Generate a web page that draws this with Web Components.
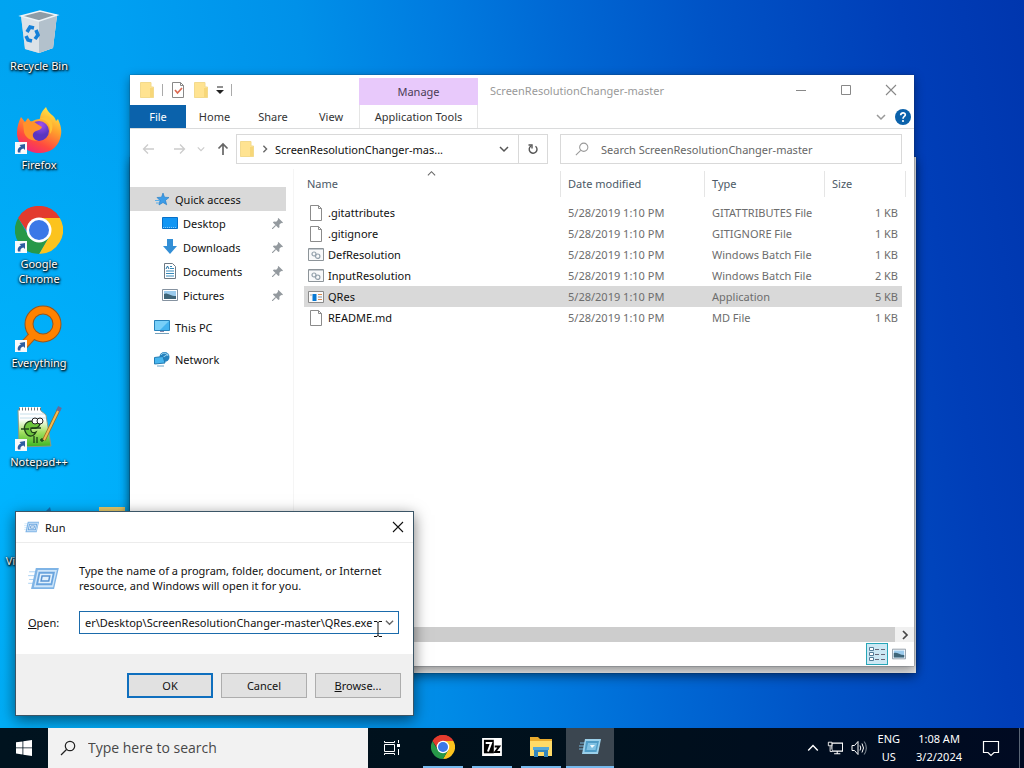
<!DOCTYPE html>
<html lang="en">
<head>
<meta charset="utf-8">
<title>Desktop</title>
<style>
  html, body { margin: 0; height: 100%; }
  body { font: 11px/15px "Noto Sans", "Open Sans", sans-serif; color: #111; overflow: hidden; }
</style>
</head>
<body>
<desk-top></desk-top>
<script>
const ICONS = {
  bin: ['0 0 48 48', `<path d="M6 8 25 3l17 4-4 33-14 5-14-4z" fill="#b9c7d2"/><path d="M6 8l18 5 18-6-4 33-14 5-14-4z" fill="#dbe2e8"/><path d="M24 13 42 7l-4 33-14 5z" fill="#b3c1cc"/><path d="M6 8 25 3l17 4-18 6z" fill="#8e9ca6" stroke="#edf4f8" stroke-width="1.4"/><g fill="none" stroke="#1480d8" stroke-width="3.600"><path d="M12 24l3-5 4 1"/><path d="M21 22l2 5-3 4"/><path d="M17 33l-4-1-2-4"/></g>`],
  firefox: ['0 0 48 48', `<defs><linearGradient id="a" x1=".8" y1="0" x2=".3" y2="1"><stop offset="0" stop-color="#fff04a"/><stop offset=".4" stop-color="#ffa02c"/><stop offset=".75" stop-color="#ff4a3f"/><stop offset="1" stop-color="#f0257a"/></linearGradient><radialGradient id="b" cx=".6" cy=".2"><stop offset="0" stop-color="#a050f0"/><stop offset="1" stop-color="#5a35c0"/></radialGradient></defs><path d="M6 10l4 5 3-4 3 4c3-2 6-3 9-3 0-5 3-9 6-12 2 7 9 8 10 14l2-2c4 9 4 14 2 20-3 9-11 14-20 14C12 46 2 38 2 26c0-7 2-12 4-16z" fill="url(#a)"/><circle cx="24" cy="24" r="10" fill="url(#b)"/><path d="M8 16c5-3 12-2 14 1l5 3c-1 4-8 3-9 7-1 3 2 6 5 7-8 0-13-4-14-9z" fill="#ff922b"/><path d="M24 12c9 0 12 7 11 15 4-5 3-14-2-18z" fill="#ffc336"/>`],
  chrome: ['0 0 48 48', `<path d="M24 24 3.200 12A24 24 0 0 1 44.800 12z" fill="#e33b2e"/><path d="M24 12h20.800A24 24 0 0 1 24 48l10.500-18z" fill="#fcc31e"/><path d="M3.200 12l10.500 18L34.500 30 24 48A24 24 0 0 1 3.200 12z" fill="#279848"/><path d="M3.200 12A24 24 0 0 1 44.800 12H24L13 27z" fill="#e33b2e"/><circle cx="24" cy="24" r="12.500" fill="#fff"/><circle cx="24" cy="24" r="10" fill="#3b78e7"/>`],
  everything: ['0 0 48 48', `<path d="M20 28 8 41" stroke="#a75a1c" stroke-width="9"/><circle cx="28" cy="19" r="14" fill="none" stroke="#94561f" stroke-width="9"/><path d="M20 28 8 41" stroke="#ff8200" stroke-width="7"/><circle cx="28" cy="19" r="14" fill="none" stroke="#ff8200" stroke-width="7"/>`],
  notepad: ['0 0 48 48', `<defs><linearGradient id="n" x2="0" y2="1"><stop offset=".25" stop-color="#fff"/><stop offset=".6" stop-color="#a4e062"/><stop offset="1" stop-color="#39b420"/></linearGradient></defs><path d="M3 6h22l6 5 5 31-32 1z" fill="url(#n)" stroke="#8a9a88"/><path d="M4 5h22" stroke="#fff" stroke-width="4"/><path d="M4 5h22" stroke="#777" stroke-width="3" stroke-dasharray="1 2"/><path d="M5 10h24M5 14h26" stroke="#c6dfea"/><g fill="#6cc43c" stroke="#1d3d18" stroke-width="1.300"><path d="M20 18c-8-3-12 3-10 9s8 7 11 1c-4 2-6-1-5-4 4 1 8 0 9-4z"/></g><circle cx="20" cy="17" r="3" fill="#fff" stroke="#222"/><circle cx="25" cy="17" r="3" fill="#fff" stroke="#222"/><path d="M6 25h8M17 24h9M19 32v7M22 33v6M25 36h4M27 34v4" fill="none" stroke="#1d4418" stroke-width="1.300"/><path d="M29 36 44 5" stroke="#9a671b" stroke-width="3.500"/><path d="M29 36 44 5" stroke="#f2bc54" stroke-width="2"/><path d="M43 7l2-4" stroke="#6a6b96" stroke-width="4"/>`],
  vscode: ['0 0 48 48', `<path d="M24 15 35 4l1 4v28l-8 4L16 30z" fill="#1471b4"/>`],
  yellow: ['0 0 48 48', `<path d="M9 4h26v40H9z" fill="#e9cb6a"/>`],
  shortcut: ['0 0 12 12', `<path d="M0 0h12v12H0z" fill="#f8f9fb"/><path d="M3 10.500C2 7 4 5 6 4.500L4.500 3 10 2v6L8.500 6.500C6 7 5 8.500 5.500 10.500z" fill="#2d5ca0"/>`],
  folder: ['0 0 16 16', `<path d="M1.500.5H12V5h2.500v11h-13z" fill="#ffe391"/><path d="M11 6h3v9h-3z" fill="#f7d779"/><path d="M1.500.5H12V5h2.500v10.500h-13z" fill="none" stroke="#f3da8d"/>`],
  check: ['0 0 16 16', `<path d="M2.500.5h8l3 3v12h-11z" fill="#fff" stroke="#888"/><path d="M10.500.5v3h3" fill="none" stroke="#888"/><path d="M5 8l2.500 3L12 6" fill="none" stroke="#dc6a52" stroke-width="1.700"/>`],
  qat: ['0 0 8 8', `<path d="M1 1h6" stroke="#222"/><path d="M0 4h8L4 8z" fill="#222"/>`],
  min: ['0 0 12 12', `<path d="M1 6.500h10" stroke="currentColor"/>`],
  max: ['0 0 12 12', `<path d="M1.500 1.500h9v9h-9z" fill="none" stroke="currentColor"/>`],
  close: ['0 0 12 12', `<path d="M1 1l10 10M11 1 1 11" stroke="currentColor" stroke-width="1.100"/>`],
  down: ['0 0 10 10', `<path d="M1 3l4 4 4-4" fill="none" stroke="currentColor" stroke-width="1.500"/>`],
  up: ['0 0 10 10', `<path d="M1 7l4-4 4 4" fill="none" stroke="currentColor" stroke-width="1.200"/>`],
  right: ['0 0 10 10', `<path d="M3 1l4 4-4 4" fill="none" stroke="currentColor" stroke-width="1.700"/>`],
  back: ['0 0 14 14', `<path d="M2 7h10M6 2.500 1.500 7 6 11.500" fill="none" stroke="currentColor" stroke-width="1.300"/>`],
  fwd: ['0 0 14 14', `<path d="M2 7h10M8 2.500 12.500 7 8 11.500" fill="none" stroke="currentColor" stroke-width="1.300"/>`],
  upward: ['0 0 14 14', `<path d="M7 13V2M2.500 6.500 7 2l4.500 4.500" fill="none" stroke="currentColor" stroke-width="1.700"/>`],
  refresh: ['0 0 14 14', `<path d="M9.500 4.200A3.900 3.900 0 1 1 5 4" fill="none" stroke="#555" stroke-width="1.400"/><path d="M2.500 3h3.500v3.500" fill="none" stroke="#555" stroke-width="1.400"/>`],
  search: ['0 0 16 16', `<circle cx="10" cy="6" r="4.700" fill="none" stroke="currentColor" stroke-width="1.200"/><path d="M6.500 9.500 1 15" stroke="currentColor" stroke-width="1.200"/>`],
  help: ['0 0 16 16', `<circle cx="8" cy="8" r="8" fill="#0b62ab"/><path d="M5.700 6.200c0-3.200 4.800-3 4.600-.2C10.200 7.500 8 7.500 8 9.700" fill="none" stroke="#fff" stroke-width="1.700"/><circle cx="8" cy="12" r="1.100" fill="#fff"/>`],
  star: ['0 0 16 16', `<path d="M9 2l1.500 4.200 4.500.3-3.500 2.800 1.200 4.500L9 11.500 5 14l1-4.500L3 6.500l4.500-.3z" fill="#3c9ce8" stroke="#1c78c4" stroke-width=".6"/><path d="M1 9.500h5M2 12h3" stroke="#59aeea"/>`],
  desktop: ['0 0 16 16', `<path d="M.5 2.500h15v11H.5z" fill="#1296f4" stroke="#0870c8"/><path d="M1 12.500h14" stroke="#86cbf9" stroke-dasharray="1 1"/>`],
  download: ['0 0 16 16', `<path d="M5 0h6v7h4l-7 8-7-8h4z" fill="#338fd6"/>`],
  document: ['0 0 16 16', `<path d="M2.500.5h8l3 3v12h-11z" fill="#fff" stroke="#6d7984"/><path d="M4 8h8M4 10.500h8M4 13h8M8 5.500h4M8 3.500h2" stroke="#388aba"/><path d="M4 6l1.500-3L7 6" fill="none" stroke="#1b6fa4"/>`],
  picture: ['0 0 16 16', `<path d="M.5 2.500h15v11H.5z" fill="#fff" stroke="#8592a0"/><path d="M2 4h12v8H2z" fill="#9bcbed"/><path d="M2 7c3-2 6 2 12 2v3H2z" fill="#3f6578"/>`],
  pc: ['0 0 16 16', `<path d="M.5 1.500h15v10H.5z" fill="#43b3ef" stroke="#2783bb"/><path d="M1 2h14L6 11H1z" fill="#78cff8"/><path d="M6 12h4v1H6z" fill="#88a"/><path d="M1 14.500h14" stroke="#76a1bc"/>`],
  network: ['0 0 16 16', `<circle cx="10.500" cy="6" r="5" fill="#2682be"/><path d="M7 4c2-3 6-2 7 1M8 7l6-4" stroke="#9bd5f1" fill="none"/><path d="M.5 6.500 9 5.500l2 6.500-10.500 1z" fill="#47b5ee" stroke="#217bb3"/><path d="M3 15h7" stroke="#6ba4c5"/>`],
  pin: ['0 0 12 12', `<path d="M7 0l5 5-1 .7-1-.3-2 2 .2 2.600L7 11 1 5l1-1.200 2.600.2 2-2-.4-1z" fill="#949a9f"/><path d="M4 8 0 12" stroke="#949a9f" stroke-width="1.300"/>`],
  file: ['0 0 16 16', `<path d="M2.500.5h8l3 3v12h-11z" fill="#fff" stroke="#8b8b8b"/><path d="M10.500.5v3h3" fill="none" stroke="#8b8b8b"/>`],
  batch: ['0 0 16 16', `<path d="M.5 1.500h15v12H.5z" fill="#f8f9fa" stroke="#8d9499"/><path d="M1 2.500h14" stroke="#c3c9ce"/><g fill="none" stroke="#93a0ab" stroke-width="1.200"><circle cx="6" cy="7" r="2"/><circle cx="9.700" cy="9.200" r="2.200"/></g>`],
  app: ['0 0 16 16', `<path d="M.5 2.500h15v11H.5z" fill="#fafafa" stroke="#898989"/><path d="M4.500 5h4v7h-4z" fill="#0878d2"/><path d="M10 5.500h4" stroke="#d68a51"/><path d="M10 8h4" stroke="#7a92a8"/><path d="M10 10.500h4" stroke="#d68a51"/><path d="M2 6h2" stroke="#aaa"/>`],
  run: ['0 0 32 24', `<path d="M1 5h9M0 9h8M1 13h7M0 17h7" stroke="#a8d1f3"/><path d="M8 1h24l-5 22H3z" fill="#7fb4e6"/><path d="M10 3h20l-4 18H6z" fill="#cfe6fa"/><path d="M11 5h17l-3 14h-17z" fill="#6ba5de"/><path d="M12.500 7H25.500l-2 10H10.500z" fill="#e2f1fd"/><path d="M14.500 9.500h8l-1 5h-8z" fill="none" stroke="#5a94d2" stroke-width="1.600"/>`],
  runbar: ['0 0 24 24', `<path d="M2 8h5M1 11h5M1 14h5" stroke="#79b6d9"/><path d="M7 4h16l-3 15H4z" fill="#9bd0ea"/><path d="M8 6h13l-2.500 11h-12z" fill="#4f9cc6"/><path d="M10 8h9l-1.500 7h-9z" fill="#7fc1e3"/><path d="M12 10h5l-3 3z" fill="#f2fbff"/>`],
  details: ['0 0 16 16', `<g fill="#fff" stroke="#547d98"><path d="M.5 1.500h4v3h-4zM.5 6.500h4v3h-4zM.5 11.500h4v3h-4z"/></g><path d="M6 3.500h4M6 8.500h4M6 13.500h4M12 3.500h4M12 8.500h4M12 13.500h4" stroke="#667"/>`],
  ibeam: ['0 0 10 16', `<path d="M1 .500h3l1 1 1-1h3M5 1v14M1 15.500h3l1-1 1 1h3" fill="none" stroke="#111"/>`],
  windows: ['0 0 16 16', `<path d="M0 2.300 6.500 1.400v6.100H0zM7.300 1.300 16 0v7.500H7.300zM0 8.300h6.500v6.200L0 13.600zM7.300 8.300H16V16l-8.700-1.300z" fill="#fff"/>`],
  taskview: ['0 0 16 16', `<path d="M.5 4.500h10v7H.5zM.5 1v1.500h10V1M.5 15v-1.500h10V15M14.500 0v3M14.500 9v6" fill="none" stroke="#fff"/><path d="M13 4h3v3h-3z" fill="#fff"/>`],
  sevenz: ['0 0 22 20', `<path d="M0 0h22v20H0z" fill="#fff"/><path d="M2 2h11v15H2z" fill="#000"/><path d="M4 5.500h6L6.500 15" fill="none" stroke="#fff" stroke-width="2.200"/><path d="M14 9.500h5l-4.500 6H20" fill="none" stroke="#000" stroke-width="2.200"/>`],
  explorer: ['0 0 24 24', `<path d="M1 2h8l2 2h12v17H1z" fill="#e9ab2e"/><path d="M1 6h22v15H1z" fill="#ffdb68"/><path d="M5 12h14v10h-4v-5H9v5H5z" fill="#3486bc"/><path d="M4 12h16v3H4z" fill="#54a8d8"/>`],
  net: ['0 0 18 16', `<path d="M5.500 2.500h12v9h-12zM11.500 12v3M8 14.500h7" fill="none" stroke="#fff" stroke-width="1.200"/><path d="M1.500 1.500h4v4h-4zM3.500 6v6H6" fill="#08121e" stroke="#fff"/>`],
  volume: ['0 0 16 16', `<path d="M1 5.500h2.500l3.500-4v13l-3.500-4H1z" fill="none" stroke="#fff"/><path d="M9 5.500q1.500 2.500 0 5M11 3.500q3 4.500 0 9" fill="none" stroke="#fff"/><path d="M13.300 1.500q4 6.500 0 13" fill="none" stroke="#8a949d"/>`],
  notif: ['0 0 18 18', `<path d="M1.500 2.500h15v11h-4.500L9 16.500l-3-3H1.500z" fill="none" stroke="#fff" stroke-width="1.200"/>`]
};

class Base extends HTMLElement {
  connectedCallback() {
    if (this.shadowRoot) return;
    const root = this.attachShadow({ mode: 'open' });
    root.innerHTML = `<style>*{box-sizing:border-box}button{font:inherit;color:inherit;background:none;border:0;padding:0;margin:0}a{color:inherit;text-decoration:none}${this.css()}</style>${this.html()}`;
  }
}
const define = (name, css, html) => customElements.define(name, class extends Base {
  css() { return css; }
  html() { return typeof html === 'function' ? html(this) : html; }
});

define('ui-icon', `:host{display:inline-flex;flex:none;width:var(--w,16px);height:var(--h,var(--w,16px))}svg{width:100%;height:100%}`,
  el => { const [vb, body] = ICONS[el.getAttribute('name')]; return `<svg viewBox="${vb}" aria-hidden="true">${body}</svg>`; });

define('desktop-icon', `
  :host{display:block;width:78px;height:99px;padding-top:8px;text-align:center;color:#fff;font-size:11px}
  a{display:flex;flex-direction:column;align-items:center;gap:2px}
  .pic{position:relative;--w:48px;display:flex}
  .pic ui-icon+ui-icon{position:absolute;left:0;bottom:1px;--w:12px}
  span{text-shadow:1px 1px 2px #000,0 1px 3px #000,0 0 2px #000a}`,
  el => `<a href="#"><div class="pic"><ui-icon name="${el.getAttribute('icon')}"></ui-icon>${el.hasAttribute('link') ? '<ui-icon name="shortcut"></ui-icon>' : ''}</div><span><slot></slot></span></a>`);

define('nav-item', `
  :host{display:block;margin-right:7px;height:24px}
  :host([gap]){margin-top:8px}
  :host([selected]){background:#d9d9d9}
  a{display:flex;align-items:center;height:24px;gap:5px;padding:0 3px 0 24px}
  :host([sub]) a{padding-left:32px}
  .pin{--w:11px;margin-left:auto}`,
  el => `<a href="#"><ui-icon name="${el.getAttribute('icon')}"></ui-icon><slot></slot>${el.hasAttribute('sub') ? '<ui-icon class="pin" name="pin"></ui-icon>' : ''}</a>`);

const files = [
  ['file', '.gitattributes', 'GITATTRIBUTES File', '1 KB'],
  ['file', '.gitignore', 'GITIGNORE File', '1 KB'],
  ['batch', 'DefResolution', 'Windows Batch File', '1 KB'],
  ['batch', 'InputResolution', 'Windows Batch File', '2 KB'],
  ['app', 'QRes', 'Application', '5 KB'],
  ['file', 'README.md', 'MD File', '1 KB']
];
define('file-table', `
  :host{display:block;position:relative;padding-left:10px;padding-right:8px}
  table{width:100%;border-collapse:collapse;table-layout:fixed}
  .date{width:144px}.type{width:120px}.size{width:81px}
  th{padding:0 0 5px;text-align:left;font-weight:400;color:#4c5966}
  th div{height:26px;line-height:26px;border-right:1px solid #e5e5e5;padding-left:7px}
  th:first-child div{padding-left:3px}
  td{height:21px;padding:0 8px 0 7px;color:#6d6d6d;line-height:21px;white-space:nowrap}
  td:first-child{padding-left:4px;color:#111}
  td:last-child{text-align:right}
  td div{display:flex;align-items:center;gap:4px}
  tr.on td{background:#d9d9d9}
  tr.on td:last-child{box-shadow:inset -4px 0 #fff}
  .sort{position:absolute;left:133px;top:-2px;--w:9px;color:#666}`,
  `<ui-icon class="sort" name="up"></ui-icon><table><colgroup><col><col class="date"><col class="type"><col class="size"></colgroup>
  <thead><tr><th><div>Name</div></th><th><div>Date modified</div></th><th><div>Type</div></th><th><div>Size</div></th></tr></thead>
  <tbody>${files.map(f => `<tr class="${f[1] === 'QRes' ? 'on' : ''}"><td><div><ui-icon name="${f[0]}"></ui-icon>${f[1]}</div></td><td>5/28/2019 1:10 PM</td><td>${f[2]}</td><td>${f[3]}</td></tr>`).join('')}</tbody></table>`);

define('explorer-ribbon', `
  :host{display:grid;grid-template-columns:56px 57px 60px 56px 119px 1fr;grid-template-rows:30px 23px;border-bottom:1px solid #dadbdc;color:#333}
  .qat{grid-column:1/5;display:flex;align-items:center;gap:7px;padding-left:9px}
  .qat i{width:1px;height:12px;background:#aaa}
  .qat .d{--w:8px}
  .manage{background:#e8c9fb;margin-top:3px;display:flex;align-items:center;justify-content:center;color:#4a3c55}
  .title{display:flex;align-items:center;padding-left:12px;color:#999}
  .title div{margin:0 1px 0 auto;display:flex}
  .title button{width:45px;height:28px;display:flex;align-items:center;justify-content:center;--w:12px;color:#888}
  a{display:flex;align-items:center;justify-content:center}
  .file{background:#0b62ab;color:#fff}
  .tools{border:solid #e5e5e5;border-width:0 1px}
  .end{display:flex;align-items:center;justify-content:flex-end;gap:9px;padding-right:3px;color:#999}
  .end .d{--w:10px}`,
  `<div class="qat"><ui-icon name="folder"></ui-icon><i></i><ui-icon name="check"></ui-icon><ui-icon name="folder"></ui-icon><ui-icon class="d" name="qat"></ui-icon><i></i></div>
  <div class="manage">Manage</div>
  <div class="title"><span>ScreenResolutionChanger-master</span><div><button aria-label="Minimize"><ui-icon name="min"></ui-icon></button><button aria-label="Maximize"><ui-icon name="max"></ui-icon></button><button aria-label="Close"><ui-icon name="close"></ui-icon></button></div></div>
  <a class="file" href="#">File</a><a href="#">Home</a><a href="#">Share</a><a href="#">View</a><a class="tools" href="#">Application Tools</a>
  <div class="end"><ui-icon class="d" name="down"></ui-icon><ui-icon name="help"></ui-icon></div>`);

define('address-bar', `
  :host{display:grid;grid-template-columns:94px 312fr 12px 342fr;align-items:center;height:40px;padding:0 12px}
  .nav{display:flex;align-items:center;--w:14px;color:#ccc;gap:16px}
  .nav .s{--w:8px;margin:0 -5px}
  .nav .u{color:#666}
  .box{display:flex;align-items:center;height:30px;border:1px solid #d9d9d9;min-width:0}
  .path{flex:1;display:flex;align-items:center;gap:6px;padding-left:2px;color:#111}
  .path ui-icon{color:#666}
  .sm{--w:8px}
  .box button{width:29px;height:28px;display:flex;align-items:center;justify-content:center;color:#555;--w:10px}
  .box button+button{border-left:1px solid #d9d9d9;--w:14px}
  .find{grid-column:4;padding-left:14px;gap:12px;color:#999;--w:14px}
  input{border:0;outline:0;background:none;font:inherit;flex:1;min-width:0;padding:0}
  input::placeholder{color:#666;opacity:1}`,
  `<div class="nav"><ui-icon name="back"></ui-icon><ui-icon name="fwd"></ui-icon><ui-icon class="s" name="down"></ui-icon><ui-icon class="u" name="upward"></ui-icon></div>
  <div class="box"><div class="path"><ui-icon name="folder"></ui-icon><ui-icon class="sm" name="right"></ui-icon>ScreenResolutionChanger-mas...</div><button aria-label="Recent"><ui-icon name="down"></ui-icon></button><button aria-label="Refresh"><ui-icon name="refresh"></ui-icon></button></div>
  <label class="box find"><ui-icon name="search"></ui-icon><input type="text" aria-label="Search folder" placeholder="Search ScreenResolutionChanger-master"></label>`);

define('explorer-window', `
  :host{display:flex;flex-direction:column;background:#fff;box-shadow:0 0 1px #234,0 3px 10px #0006}
  .main{flex:1;display:grid;grid-template-columns:164px 1fr;min-height:0}
  nav{padding-top:18px;border-right:1px solid #f5f5f5}
  .list{display:flex;flex-direction:column;padding-top:2px}
  .scroll{margin-top:auto;height:15px;background:#f0f0f0;display:flex;align-items:center;justify-content:space-between}
  .scroll div{flex:1;height:100%;background:#cdcdcd}
  .scroll ui-icon{--w:10px;margin:0 4px 0 5px;color:#444}
  footer{height:24px;display:flex;justify-content:flex-end;align-items:center;padding-right:4px}
  footer button{width:22px;height:22px;display:flex;align-items:center;justify-content:center;--w:16px}
  footer button:last-child{--w:14px}
  .on{background:#cce8f4;border:1px solid #28a6b8}`,
  `<explorer-ribbon></explorer-ribbon><address-bar></address-bar>
  <div class="main"><nav>
    <nav-item icon="star" selected>Quick access</nav-item>
    <nav-item icon="desktop" sub>Desktop</nav-item><nav-item icon="download" sub>Downloads</nav-item>
    <nav-item icon="document" sub>Documents</nav-item><nav-item icon="picture" sub>Pictures</nav-item>
    <nav-item icon="pc" gap>This PC</nav-item><nav-item icon="network" gap>Network</nav-item>
  </nav><div class="list"><file-table></file-table><div class="scroll"><div></div><ui-icon name="right"></ui-icon></div></div></div>
  <footer><button class="on" aria-label="Details"><ui-icon name="details"></ui-icon></button><button aria-label="Large icons"><ui-icon name="picture"></ui-icon></button></footer>`);

define('run-dialog', `
  :host{display:block;background:#fff;border:1px solid #3b5566;box-shadow:0 4px 14px #0008;color:#111}
  header{display:flex;align-items:center;height:31px;padding:0 9px 0 8px;gap:6px;border-bottom:1px solid #ececec}
  header ui-icon{--w:15px;--h:12px}
  header button{margin-left:auto;display:flex;color:#111}
  header button ui-icon{--w:12px}
  .body{display:grid;grid-template-columns:51px 1fr;padding:20px 14px 20px 12px;row-gap:18px;align-items:center}
  .body>ui-icon{--w:31px;--h:23px}
  p{margin:0}
  .combo{display:flex;align-items:center;height:23px;border:1px solid #1b6bab;padding:0 4px 0 5px;position:relative}
  input{flex:1;min-width:0;border:0;outline:0;padding:0;font:inherit;color:inherit;background:none}
  .combo .v{--w:9px;color:#666}
  .combo .c{position:absolute;left:293px;top:9px;--w:10px;--h:16px}
  footer{background:#f0f0f0;display:flex;justify-content:flex-end;gap:8px;padding:19px 12px 17px}
  footer button{width:86px;height:25px;background:#e1e1e1;border:1px solid #adadad}
  footer .ok{border:2px solid #0f6fbe}`,
  `<header><ui-icon name="run"></ui-icon><span>Run</span><button aria-label="Close"><ui-icon name="close"></ui-icon></button></header>
  <div class="body"><ui-icon name="run"></ui-icon><p>Type the name of a program, folder, document, or Internet<br>resource, and Windows will open it for you.</p>
  <label for="open"><u>O</u>pen:</label><div class="combo"><input id="open" type="text" value="er\\Desktop\\ScreenResolutionChanger-master\\QRes.exe"><ui-icon class="v" name="down"></ui-icon><ui-icon class="c" name="ibeam"></ui-icon></div></div>
  <footer><button class="ok">OK</button><button>Cancel</button><button><u>B</u>rowse...</button></footer>`);

define('task-button', `
  :host{display:block;width:48px;height:40px}
  button{width:100%;height:100%;display:flex;align-items:center;justify-content:center;position:relative}
  :host([open]) button{border-bottom:2px solid #76b9ed;width:40px;margin:0 auto;display:flex}
  :host([active]) button{width:48px;background:#3b4650}`,
  el => `<button aria-label="${el.getAttribute('icon')}"><ui-icon name="${el.getAttribute('icon')}"></ui-icon></button>`);

define('task-bar', `
  :host{display:flex;height:40px;background:linear-gradient(90deg,#00131f,#00101c 60%,#000a22);color:#fff}
  task-button{--w:24px}
  .small{--w:16px}.z{--w:20px;--h:18px}
  .search{display:flex;align-items:center;width:320px;background:#f2f2f2;color:#222;padding-left:12px;gap:12px;font:14px/18px "Open Sans",sans-serif}
  .search input{border:0;outline:0;background:none;font:inherit;padding:0;flex:1;min-width:0}
  .search input::placeholder{color:#484848;opacity:1}
  .apps{display:flex;gap:1px;margin-left:3px}
  .tray{margin-left:auto;display:flex;align-items:center;text-align:center;line-height:18px}
  .icons{display:flex;align-items:center;gap:8px;margin-right:11px}
  .icons .u{--w:12px}
  .clock{margin:0 20px 0 16px}
  .note{--w:18px}
  .show{width:1px;height:40px;background:#5a6676;margin:0 4px 0 19px}`,
  `<task-button class="small" icon="windows"></task-button>
  <label class="search"><ui-icon name="search"></ui-icon><input type="text" aria-label="Search" placeholder="Type here to search"></label>
  <task-button class="small" icon="taskview"></task-button>
  <div class="apps"><task-button open icon="chrome"></task-button><task-button open class="z" icon="sevenz"></task-button><task-button open icon="explorer"></task-button><task-button open active icon="runbar"></task-button></div>
  <div class="tray"><div class="icons"><ui-icon class="u" name="up"></ui-icon><ui-icon name="net"></ui-icon><ui-icon name="volume"></ui-icon></div><div>ENG<br>US</div><div class="clock">1:08 AM<br>3/2/2024</div><ui-icon class="note" name="notif"></ui-icon><div class="show"></div></div>`);

define('desk-top', `
  :host{display:grid;grid-template-rows:1fr 40px;height:100vh;overflow:hidden}
  main{position:relative;min-height:0;overflow:hidden;background:
    radial-gradient(ellipse 360px 420px at 0% 65%,#00b4ff,#00b4ff00),
    linear-gradient(81deg,#00a8f0 0%,#00a0f2 20%,#0091e9 36%,#007ce0 48%,#0068d4 59%,#0053c6 72%,#003eb8 89%,#0036ae 100%)}
  .icons{display:grid;grid-auto-flow:column;grid-template-rows:repeat(6,99px);grid-auto-columns:75px;width:78px}
  .behind,explorer-window,run-dialog{position:absolute}
  .behind{left:130px;right:108px;top:157px;bottom:55px;background:#e2e2e2;box-shadow:0 0 1px #024,0 4px 10px #0006}
  explorer-window{left:130px;right:110px;top:75px;bottom:62px}
  run-dialog{left:15px;top:511px;width:399px}`,
  `<main><div class="icons">
    <desktop-icon icon="bin">Recycle Bin</desktop-icon><desktop-icon icon="firefox" link>Firefox</desktop-icon>
    <desktop-icon icon="chrome" link>Google<br>Chrome</desktop-icon><desktop-icon icon="everything" link>Everything</desktop-icon>
    <desktop-icon icon="notepad" link>Notepad++</desktop-icon><desktop-icon icon="vscode">Visual Studio</desktop-icon>
    <desktop-icon icon="yellow" style="grid-row:6"></desktop-icon>
  </div><div class="behind"></div><explorer-window></explorer-window><run-dialog></run-dialog></main><task-bar></task-bar>`);
</script>
</body>
</html>
